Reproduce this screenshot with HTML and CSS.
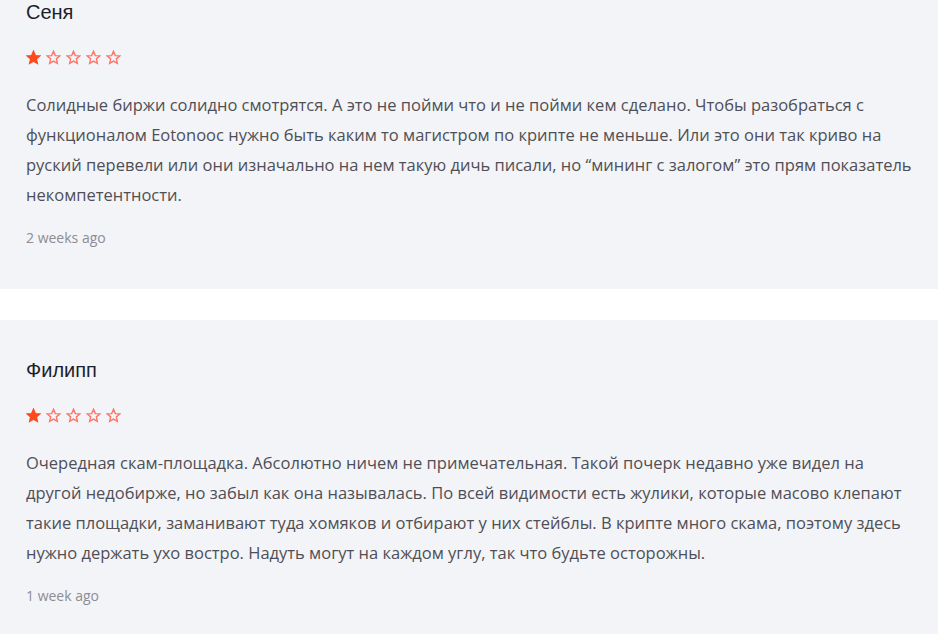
FILE: index.html
```html
<!DOCTYPE html>
<html lang="ru">
<head>
    <meta charset="UTF-8">
    <meta name="viewport" content="width=device-width, initial-scale=1.0">
    <title>Отзывы</title>
    <link rel="stylesheet" href="styles.css">
</head>
<body>
    <div class="reviews">
        <div class="review">
            <h3 class="review-name">Сеня</h3>
            <div class="stars">
                <svg class="star star-full" viewBox="0 0 24 24"><path d="M12 2l2.9 6.9 7.1.6-5.4 4.7 1.6 7.3L12 17.8 5.8 21.5l1.6-7.3L2 9.5l7.1-.6z"/></svg>
                <svg class="star" viewBox="0 0 24 24"><path d="M12 2l2.9 6.9 7.1.6-5.4 4.7 1.6 7.3L12 17.8 5.8 21.5l1.6-7.3L2 9.5l7.1-.6z"/></svg>
                <svg class="star" viewBox="0 0 24 24"><path d="M12 2l2.9 6.9 7.1.6-5.4 4.7 1.6 7.3L12 17.8 5.8 21.5l1.6-7.3L2 9.5l7.1-.6z"/></svg>
                <svg class="star" viewBox="0 0 24 24"><path d="M12 2l2.9 6.9 7.1.6-5.4 4.7 1.6 7.3L12 17.8 5.8 21.5l1.6-7.3L2 9.5l7.1-.6z"/></svg>
                <svg class="star" viewBox="0 0 24 24"><path d="M12 2l2.9 6.9 7.1.6-5.4 4.7 1.6 7.3L12 17.8 5.8 21.5l1.6-7.3L2 9.5l7.1-.6z"/></svg>
            </div>
            <p class="review-text">Солидные биржи солидно смотрятся. А это не пойми что и не пойми кем сделано. Чтобы разобраться с функционалом Eotonooc нужно быть каким то магистром по крипте не меньше. Или это они так криво на руский перевели или они изначально на нем такую дичь писали, но “мининг с залогом” это прям показатель некомпетентности.</p>
            <div class="review-date">2 weeks ago</div>
        </div>

        <div class="review">
            <h3 class="review-name">Филипп</h3>
            <div class="stars">
                <svg class="star star-full" viewBox="0 0 24 24"><path d="M12 2l2.9 6.9 7.1.6-5.4 4.7 1.6 7.3L12 17.8 5.8 21.5l1.6-7.3L2 9.5l7.1-.6z"/></svg>
                <svg class="star" viewBox="0 0 24 24"><path d="M12 2l2.9 6.9 7.1.6-5.4 4.7 1.6 7.3L12 17.8 5.8 21.5l1.6-7.3L2 9.5l7.1-.6z"/></svg>
                <svg class="star" viewBox="0 0 24 24"><path d="M12 2l2.9 6.9 7.1.6-5.4 4.7 1.6 7.3L12 17.8 5.8 21.5l1.6-7.3L2 9.5l7.1-.6z"/></svg>
                <svg class="star" viewBox="0 0 24 24"><path d="M12 2l2.9 6.9 7.1.6-5.4 4.7 1.6 7.3L12 17.8 5.8 21.5l1.6-7.3L2 9.5l7.1-.6z"/></svg>
                <svg class="star" viewBox="0 0 24 24"><path d="M12 2l2.9 6.9 7.1.6-5.4 4.7 1.6 7.3L12 17.8 5.8 21.5l1.6-7.3L2 9.5l7.1-.6z"/></svg>
            </div>
            <p class="review-text">Очередная скам-площадка. Абсолютно ничем не примечательная. Такой почерк недавно уже видел на другой недобирже, но забыл как она называлась. По всей видимости есть жулики, которые масово клепают такие площадки, заманивают туда хомяков и отбирают у них стейблы. В крипте много скама, поэтому здесь нужно держать ухо востро. Надуть могут на каждом углу, так что будьте осторожны.</p>
            <div class="review-date">1 week ago</div>
        </div>
    </div>
</body>
</html>
```

FILE: styles.css
```css
* {
    margin: 0;
    padding: 0;
    box-sizing: border-box;
}

body {
    background: #fff;
    font-family: "Open Sans", "Noto Sans", sans-serif;
    overflow: hidden;
}

.reviews {
    display: flex;
    flex-direction: column;
    gap: 31px;
    margin-top: -38px;
}

.review {
    background: #f3f4f8;
    padding: 38px 26px 41px;
}

.review-name {
    font-family: "Liberation Sans", Arial, sans-serif;
    font-size: 20px;
    font-weight: 400;
    line-height: 24px;
    color: #1b1f2b;
}

.stars {
    display: flex;
    gap: 5px;
    margin-top: 26px;
    height: 15px;
}

.star {
    width: 15px;
    height: 15px;
    fill: none;
    stroke: #ff7466;
    stroke-width: 2.2;
    stroke-linejoin: miter;
}

.star-full {
    fill: #ff4a1c;
    stroke: #ff4a1c;
}

.review-text {
    margin-top: 25px;
    font-size: 16.5px;
    line-height: 30px;
    color: #4f4f55;
}

.review-date {
    margin-top: 18px;
    font-size: 14px;
    line-height: 20px;
    color: #8c8c92;
}
```
